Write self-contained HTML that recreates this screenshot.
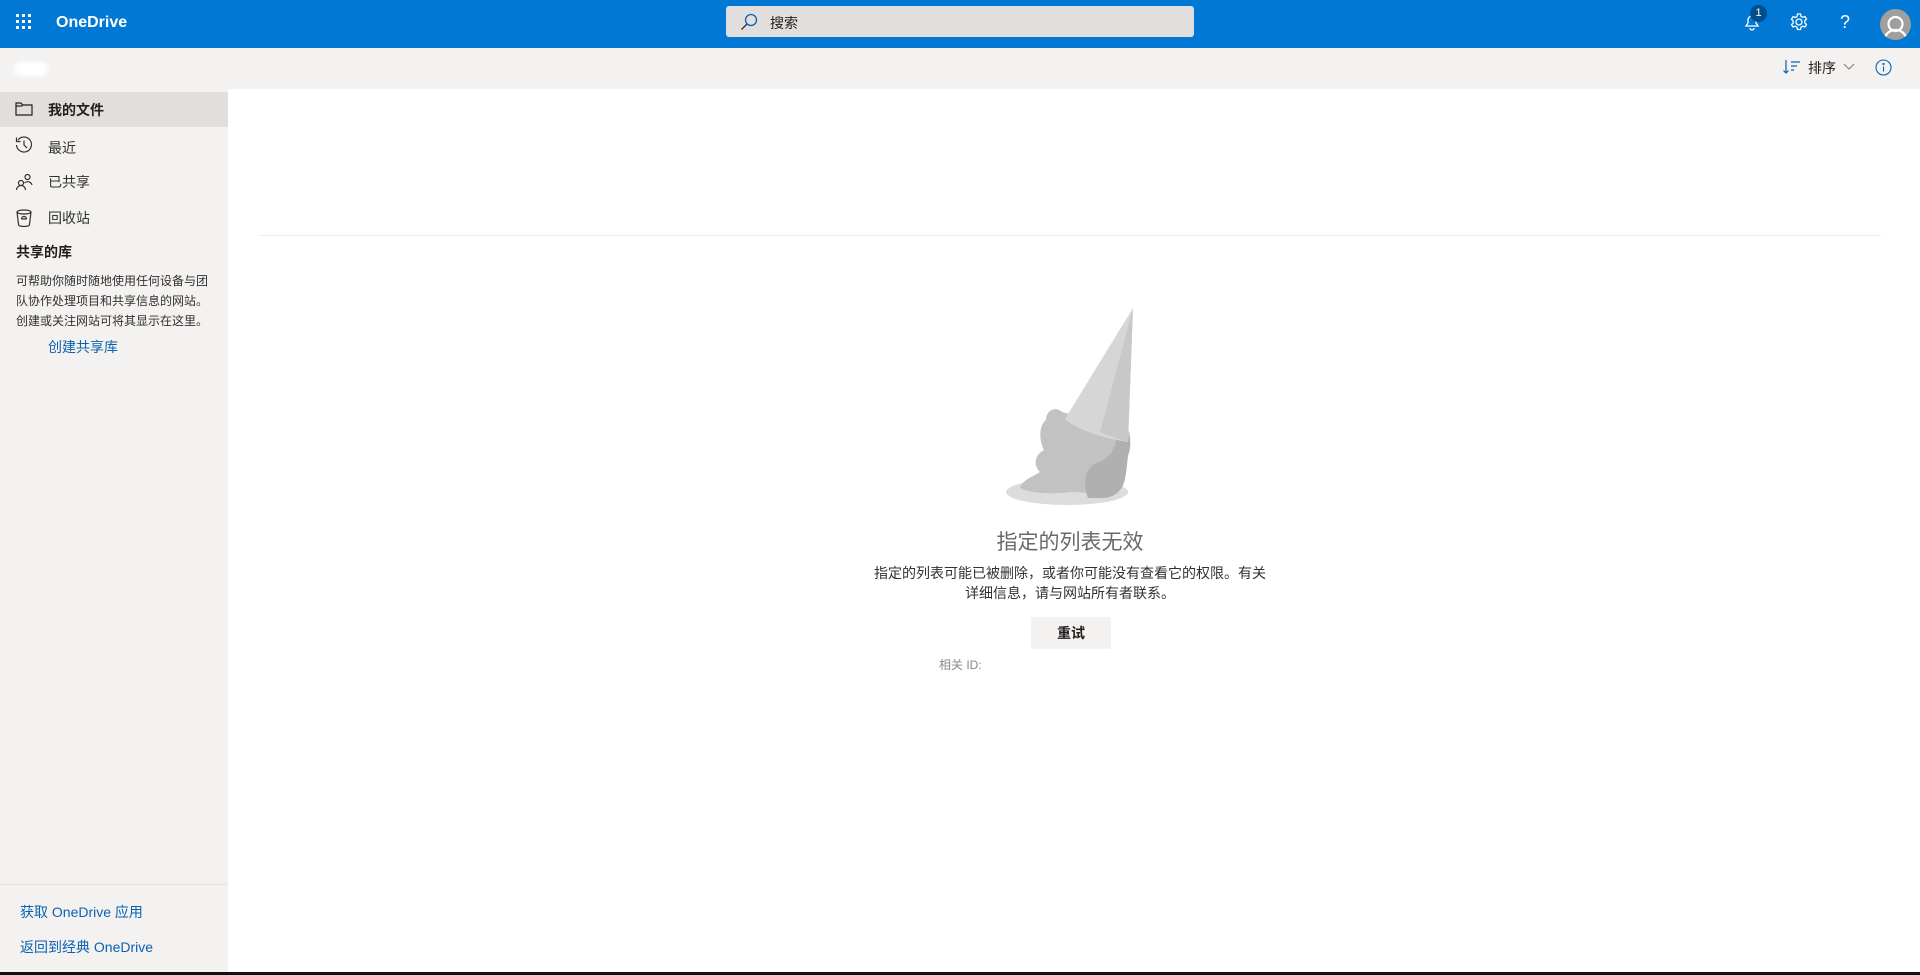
<!DOCTYPE html>
<html><head><meta charset="utf-8"><style>
*{margin:0;padding:0;box-sizing:border-box}
body{width:1920px;height:975px;overflow:hidden;background:#fff;font-family:"Liberation Sans","Noto Sans CJK SC",sans-serif;color:#323130;position:relative}
.a{position:absolute;white-space:nowrap}
.top{left:0;top:0;width:1920px;height:48px;background:#0078d4}
.cmd{left:0;top:48px;width:1920px;height:41px;background:#f3f2f1}
.side{left:0;top:89px;width:228px;height:886px;background:#f3f2f1}
.nav{font-size:14px;line-height:20px}
.blue{color:#0b62b0}
</style></head><body>
<div class="a top"></div>
<div class="a" style="left:16px;top:14px;width:16px;height:16px">
<svg width="16" height="16" viewBox="0 0 16 16" fill="#fff"><rect x="0" y="0" width="3" height="3"/><rect x="6" y="0" width="3" height="3"/><rect x="12" y="0" width="3" height="3"/><rect x="0" y="6" width="3" height="3"/><rect x="6" y="6" width="3" height="3"/><rect x="12" y="6" width="3" height="3"/><rect x="0" y="12" width="3" height="3"/><rect x="6" y="12" width="3" height="3"/><rect x="12" y="12" width="3" height="3"/></svg></div>
<div class="a" style="left:56px;top:12px;font-size:16px;font-weight:bold;color:#fff;line-height:22px">OneDrive</div>
<div class="a" style="left:726px;top:6px;width:468px;height:31px;background:#e1dfdd;border-radius:3px"></div>
<svg class="a" style="left:740px;top:13px" width="18" height="18" viewBox="0 0 18 18" fill="none" stroke="#0b62b0" stroke-width="1.3"><circle cx="11" cy="7" r="5.5"/><line x1="7" y1="11" x2="1.5" y2="16.5" stroke="#323130"/></svg>
<div class="a" style="left:770px;top:13px;font-size:14px;line-height:20px;color:#201f1e">搜索</div>
<svg class="a" style="left:1742px;top:12px" width="20" height="20" viewBox="0 0 20 20" fill="none" stroke="#fff" stroke-width="1.3"><path d="M4 14h12l-2-3V8a4 4 0 0 0-8 0v3z"/><path d="M8 16a2 2 0 0 0 4 0"/></svg>
<div class="a" style="left:1750px;top:5px;width:17px;height:17px;border-radius:50%;background:#004e8c;color:#fff;font-size:11px;text-align:center;line-height:17px">1</div>
<svg class="a" style="left:1789px;top:12px" width="20" height="20" viewBox="0 0 20 20" fill="none" stroke="#fff" stroke-width="1.3"><circle cx="10" cy="10" r="3"/><path d="M8.5 2h3l.5 2.3 1.8 1 2.2-.8 1.5 2.6-1.7 1.6v2.1l1.7 1.6-1.5 2.6-2.2-.8-1.8 1-.5 2.3h-3l-.5-2.3-1.8-1-2.2.8L2.5 12.6l1.7-1.6V8.9L2.5 7.3 4 4.7l2.2.8 1.8-1z"/></svg>
<div class="a" style="left:1840px;top:11px;font-size:18px;color:#fff;line-height:22px">?</div>
<div class="a" style="left:1880px;top:9px;width:31px;height:31px;border-radius:50%;background:#a19f9d;overflow:hidden">
<svg width="31" height="31" viewBox="0 0 31 31" fill="none" stroke="#fff" stroke-width="2.2"><circle cx="15.5" cy="15" r="7"/><path d="M5 30a10.5 9 0 0 1 21 0"/></svg></div>
<div class="a cmd"></div>
<div class="a" style="left:14px;top:62px;width:34px;height:14px;background:#fff;border-radius:7px;filter:blur(2px)"></div>
<svg class="a" style="left:1783px;top:59px" width="18" height="16" viewBox="0 0 18 16" fill="none" stroke="#0b62b0" stroke-width="1.2"><path d="M3 1v13M0.5 11.5 3 14l2.5-2.5"/><path d="M8 3h9M8 7h6M8 11h3"/></svg>
<div class="a" style="left:1808px;top:58px;font-size:14px;line-height:20px;color:#201f1e">排序</div>
<svg class="a" style="left:1843px;top:63px" width="12" height="8" viewBox="0 0 12 8" fill="none" stroke="#8a8886" stroke-width="1.2"><path d="M1 1l5 5 5-5"/></svg>
<svg class="a" style="left:1875px;top:59px" width="17" height="17" viewBox="0 0 17 17" fill="none" stroke="#0b62b0" stroke-width="1.1"><circle cx="8.5" cy="8.5" r="7.5"/><path d="M8.5 7.5v5"/><circle cx="8.5" cy="5" r=".6" fill="#0b62b0"/></svg>
<div class="a side"></div>
<div class="a" style="left:0;top:92px;width:228px;height:35px;background:#e1dfdd;border-radius:2px"></div>
<svg class="a" style="left:15px;top:102px" width="18" height="14" viewBox="0 0 18 14" fill="none" stroke="#201f1e" stroke-width="1.2"><path d="M1 1h5l1.5 2H17v10H1z"/><path d="M1 4h6.5"/></svg>
<div class="a nav" style="left:48px;top:100px;font-weight:bold;color:#201f1e">我的文件</div>
<svg class="a" style="left:15px;top:136px" width="18" height="18" viewBox="0 0 18 18" fill="none" stroke="#323130" stroke-width="1.2"><path d="M3 4a7.5 7.5 0 1 1-1.5 5"/><path d="M1.5 1.5v4h4"/><path d="M9 4.5V9l3 3"/></svg>
<div class="a nav" style="left:48px;top:138px">最近</div>
<svg class="a" style="left:15px;top:173px" width="18" height="18" viewBox="0 0 18 18" fill="none" stroke="#323130" stroke-width="1.2"><circle cx="6" cy="10" r="2.5"/><path d="M1.5 17a4.5 4.5 0 0 1 9 0"/><circle cx="12.5" cy="4" r="2.5"/><path d="M9.5 10a4.5 4.5 0 0 1 7.5 2"/></svg>
<div class="a nav" style="left:48px;top:172px">已共享</div>
<svg class="a" style="left:16px;top:209px" width="16" height="18" viewBox="0 0 16 18" fill="none" stroke="#323130" stroke-width="1.2"><ellipse cx="8" cy="3" rx="7" ry="2"/><path d="M1 3l1.5 12.5a5.5 2 0 0 0 11 0L15 3"/><path d="M5.5 10a2.5 2.5 0 0 1 5 0M5.5 10h5"/></svg>
<div class="a nav" style="left:48px;top:208px">回收站</div>
<div class="a nav" style="left:16px;top:242px;font-weight:bold;color:#201f1e">共享的库</div>
<div class="a" style="left:16px;top:271px;font-size:12px;line-height:20px;color:#323130">可帮助你随时随地使用任何设备与团<br>队协作处理项目和共享信息的网站。<br>创建或关注网站可将其显示在这里。</div>
<div class="a nav blue" style="left:48px;top:337px">创建共享库</div>
<div class="a" style="left:0;top:884px;width:228px;height:1px;background:#e6e4e2"></div>
<div class="a nav blue" style="left:20px;top:902px">获取 OneDrive 应用</div>
<div class="a nav blue" style="left:20px;top:937px">返回到经典 OneDrive</div>
<div class="a" style="left:0;top:972px;width:1920px;height:3px;background:#111"></div>
<div class="a" style="left:260px;top:235px;width:1621px;height:1px;background:#edebe9"></div>
<svg class="a" style="left:0;top:0" width="1920" height="975" viewBox="0 0 1920 975">
<ellipse cx="1067" cy="492" rx="61" ry="13" fill="#dcdcdc"/>
<path d="M1020 488c2-8 14-12 20-16-8-8-4-18 4-22-6-12-4-26 2-30 0-10 10-14 16-8l66 18c4 6 2 14 0 20-2 16-2 30-10 36-8 12-30 6-46 6-20 2-40 2-52-4z" fill="#c2c2c2"/>
<path d="M1128 436c4 6 2 14 0 20-2 16-2 30-10 36-8 8-18 6-30 6-6-16-2-28 6-34 14-4 22-14 22-26z" fill="#b0b0b0"/>
<path d="M1133 308L1065 419c10 10 40 20 63 23z" fill="#d6d6d6"/>
<path d="M1133 308L1100 432c10 4 20 8 28 10z" fill="#c8c8c8"/>
</svg>
<div class="a" style="left:870px;top:528px;width:400px;text-align:center;font-size:21px;line-height:30px;color:#6b6967">指定的列表无效</div>
<div class="a" style="left:850px;top:563px;width:440px;text-align:center;font-size:14px;line-height:20px;color:#323130;white-space:normal">指定的列表可能已被删除，或者你可能没有查看它的权限。有关<br>详细信息，请与网站所有者联系。</div>
<div class="a" style="left:1031px;top:617px;width:80px;height:32px;background:#f3f2f1;border-radius:2px;text-align:center;font-size:14px;font-weight:bold;line-height:32px;color:#201f1e">重试</div>
<div class="a" style="left:939px;top:657px;font-size:12px;line-height:16px;color:#8a8886">相关 ID:</div>
</body></html>
